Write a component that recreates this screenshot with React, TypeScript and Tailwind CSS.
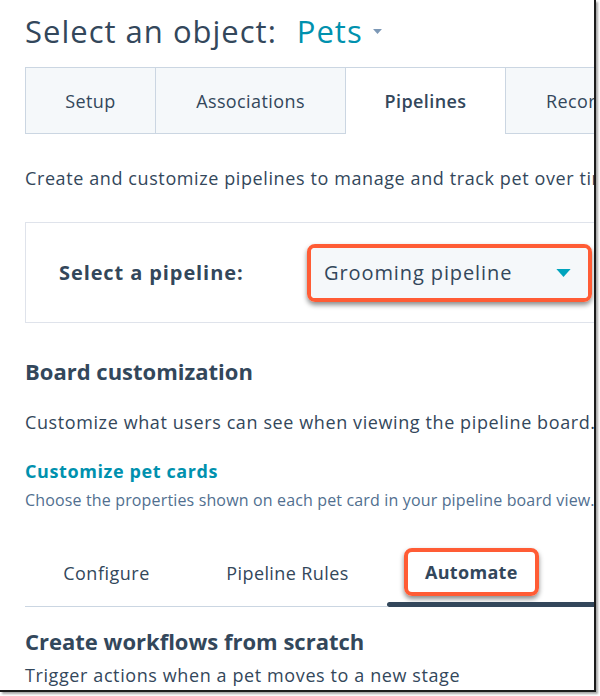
import React from "react";

const ink = "text-[#33475b]";

function Caret({ className }: { className?: string }) {
  return (
    <svg viewBox="0 0 16 9" className={className} aria-hidden>
      <path d="M0 0h16L8 9z" fill="currentColor" />
    </svg>
  );
}

function ObjectTabs() {
  const base =
    "shrink-0 h-[67px] flex items-center justify-center border-l border-t border-[#cbd6e2] text-[18px] tracking-[0.4px] whitespace-nowrap pt-[1px]";
  return (
    <div className="mt-[17px] flex">
      <div className={`${base} w-[130px] border-b bg-[#f5f8fa]`}>Setup</div>
      <div className={`${base} w-[190px] border-b bg-[#f5f8fa]`}>Associations</div>
      <div className={`${base} w-[160px] bg-white font-semibold`}>Pipelines</div>
      <div className={`${base} w-[130px] border-b border-r bg-[#f5f8fa] justify-start pl-[40px]`}>
        Records
      </div>
    </div>
  );
}

function PipelinePicker() {
  return (
    <div className="mt-[32px] h-[101px] w-[640px] border border-[#dfe3eb] flex items-center pl-[33px]">
      <span className="shrink-0 w-[248px] text-[20px] tracking-[0.9px] font-bold">Select a pipeline:</span>
      <div className="shrink-0 rounded-[8px] border-[4px] border-[#ff5c35] shadow-[0_3px_5px_rgba(0,0,0,0.45)] overflow-hidden">
        <div className="h-[50px] w-[277px] bg-[#f5f8fa] flex items-center justify-between pl-[13px] pr-[17px]">
          <span className="text-[20px] tracking-[0.9px]">Grooming pipeline</span>
          <Caret className="w-[15px] h-[8px] text-[#00a4bd]" />
        </div>
      </div>
    </div>
  );
}

function SubTabs() {
  return (
    <div className="mt-[49px] flex items-end">
      <div className="flex-none border-b border-[#cbd6e2] flex">
        <div className="w-[163px] pb-[21px] text-center text-[18px] leading-[24px] tracking-[0.5px]">Configure</div>
        <div className="w-[199px] pb-[21px] text-center text-[18px] leading-[24px] tracking-[0.4px]">Pipeline Rules</div>
      </div>
      <div className="flex-1 relative pb-[22px] pl-[38px]">
        <span className="relative inline-block text-[18px] leading-[24px] tracking-[0.3px] font-bold">
          <span className="absolute -inset-x-[21px] -inset-y-[12px] rounded-[8px] border-[4px] border-[#ff5c35] shadow-[0_3px_5px_rgba(0,0,0,0.45)]" />
          <span className="relative">Automate</span>
        </span>
        <div className="absolute left-0 right-0 bottom-0 h-[5px] rounded-l-full bg-[#33475b]" />
      </div>
    </div>
  );
}

export default function App() {
  return (
    <div className="w-[600px] h-[696px] bg-white">
      <div
        className={`w-[596px] h-[692px] overflow-hidden bg-white border-r-2 border-b-2 border-[#1c1c1c] shadow-[2px_2px_2px_rgba(0,0,0,0.35)] ${ink} font-['Open_Sans',sans-serif]`}
      >
        <div className="pl-[25px] pt-[12px] whitespace-nowrap">
          <div className="flex items-center h-[38px]">
            <h1 className="text-[31px] tracking-[1px]">Select an object:</h1>
            <div className="ml-[20px] flex items-center gap-[10px]">
              <span className="text-[31px] tracking-[1px] text-[#0091ae]">Pets</span>
              <Caret className="w-[9px] h-[5px] text-[#7c98b6]" />
            </div>
          </div>

          <ObjectTabs />

          <p className="mt-[32px] text-[18px] leading-[24px] tracking-[0.6px]">
            Create and customize pipelines to manage and track pet over time.
          </p>

          <PipelinePicker />

          <h2 className="mt-[34px] text-[22px] leading-[28px] font-bold">Board customization</h2>
          <p className="mt-[25px] text-[18px] leading-[24px] tracking-[0.6px]">
            Customize what users can see when viewing the pipeline board.
          </p>
          <a className="block mt-[25px] text-[18px] leading-[24px] tracking-[0.6px] font-bold text-[#0091ae]">
            Customize pet cards
          </a>
          <p className="mt-[6px] text-[16px] leading-[22px] tracking-[0.15px] text-[#516f90]">
            Choose the properties shown on each pet card in your pipeline board view.
          </p>

          <SubTabs />

          <h2 className="mt-[20px] text-[22px] leading-[28px] font-bold">Create workflows from scratch</h2>
          <p className="mt-[8px] text-[18px] leading-[24px] tracking-[0.6px]">
            Trigger actions when a pet moves to a new stage
          </p>
        </div>
      </div>
    </div>
  );
}
